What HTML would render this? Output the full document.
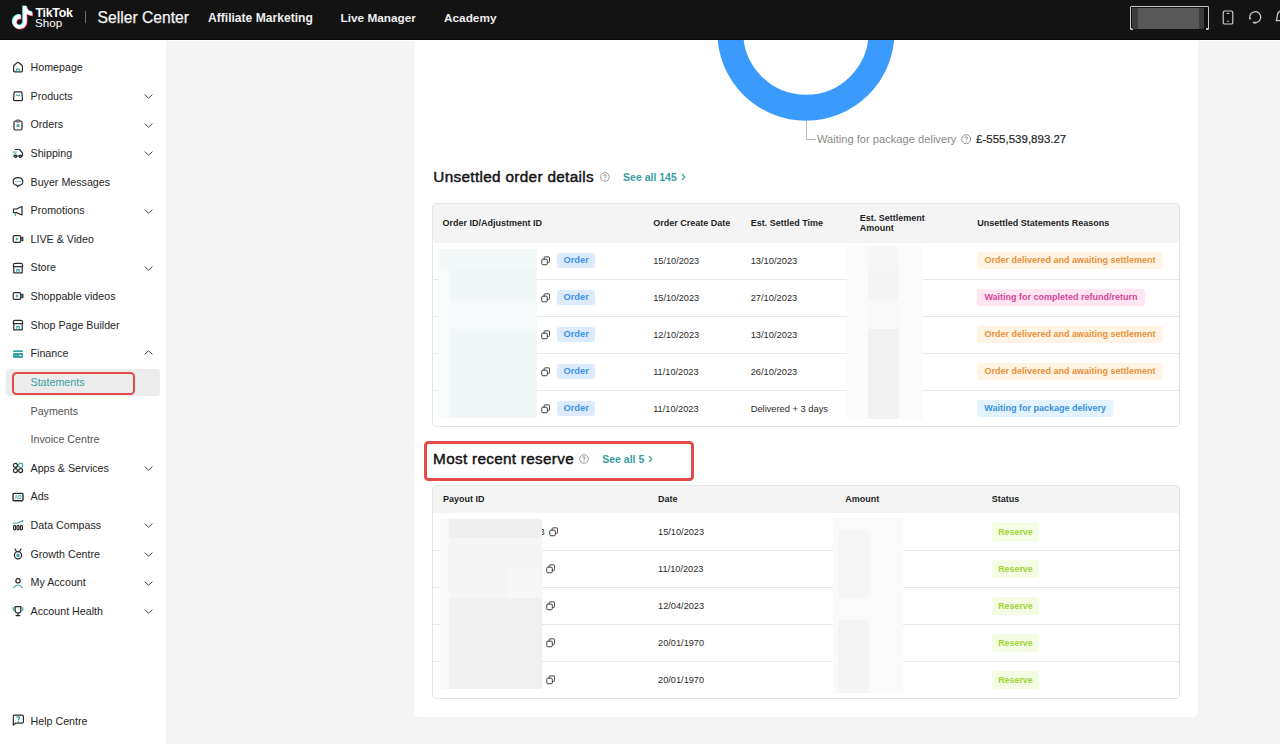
<!DOCTYPE html>
<html><head><meta charset="utf-8">
<style>
*{box-sizing:border-box;margin:0;padding:0}
html,body{width:1280px;height:744px;overflow:hidden;background:#f4f4f4;font-family:"Liberation Sans",sans-serif;color:#222}
.a{position:absolute;white-space:nowrap}
#hdr{position:absolute;left:0;top:0;width:1280px;height:40px;background:#131313;z-index:10;border-bottom:1px solid #0b0b0b}
#side{position:absolute;left:0;top:40px;width:166px;height:704px;background:#fff;z-index:5}
#gap{position:absolute;left:0;top:40px;width:1280px;height:1px;background:#fff;z-index:0}
.si{position:absolute;left:0;width:166px;height:28.63px;line-height:28.63px;font-size:10.7px;color:#262626}
.si .t{position:absolute;left:30.5px;top:0.4px}
.si svg.ic{position:absolute;left:12px;top:8.8px;width:12px;height:12px}
.si svg.ch{position:absolute;left:143.5px;top:12.8px;width:9px;height:5px}
#card{position:absolute;left:414px;top:-20px;width:784px;height:737px;background:#fff;border-radius:6px}
.tbl{position:absolute;border:1px solid #e5e5e5;border-radius:4px;overflow:hidden;background:#fff}
.th{position:absolute;left:0;top:0;width:100%;background:#f4f4f4}
.hd{position:absolute;font-size:9px;font-weight:bold;color:#1f1f1f;white-space:nowrap}
.rl{position:absolute;left:0;width:100%;height:1px;background:#ebebeb}
.cell{position:absolute;font-size:9.3px;color:#2a2a2a;white-space:nowrap;line-height:14px}
.tag{position:absolute;font-size:9px;font-weight:bold;white-space:nowrap;border-radius:3px;text-align:center}
.blur{position:absolute}
</style></head><body>

<!-- header -->
<div id="hdr">
  <svg class="a" style="left:10px;top:5px" width="25" height="26" viewBox="0 0 25 26">
    <g transform="translate(0.3,0.4) scale(0.95)">
      <path fill="#25f4ee" d="M12.525.02c1.31-.02 2.61-.01 3.91-.02.08 1.53.63 3.09 1.75 4.17 1.12 1.11 2.7 1.62 4.240 1.79v4.03c-1.44-.05-2.89-.35-4.2-.97-.57-.26-1.1-.59-1.62-.93-.01 2.92.01 5.84-.02 8.75-.08 1.4-.54 2.79-1.35 3.94-1.31 1.920-3.58 3.17-5.91 3.21-1.43.08-2.86-.31-4.080-1.03-2.02-1.19-3.44-3.37-3.65-5.71-.02-.5-.03-1-.01-1.49.18-1.9 1.12-3.72 2.58-4.96 1.66-1.44 3.98-2.13 6.15-1.72.02 1.48-.04 2.96-.04 4.44-.99-.32-2.15-.23-3.02.37-.63.41-1.110 1.04-1.36 1.75-.21.51-.15 1.07-.14 1.61.24 1.64 1.82 3.02 3.5 2.87 1.12-.01 2.19-.66 2.77-1.61.19-.33.4-.67.41-1.06.1-1.79.06-3.57.07-5.36.01-4.03-.01-8.05.02-12.07z"/>
    </g>
    <g transform="translate(1.7,1.8) scale(0.95)">
      <path fill="#fe2c55" d="M12.525.02c1.31-.02 2.61-.01 3.910-.02.08 1.53.63 3.09 1.75 4.17 1.12 1.11 2.7 1.62 4.24 1.79v4.03c-1.44-.05-2.89-.35-4.2-.97-.57-.26-1.1-.59-1.62-.93-.01 2.92.01 5.84-.02 8.75-.08 1.4-.54 2.79-1.35 3.94-1.31 1.92-3.58 3.17-5.91 3.21-1.43.08-2.86-.31-4.08-1.03-2.02-1.19-3.44-3.37-3.65-5.71-.02-.5-.03-1-.01-1.49.18-1.9 1.12-3.72 2.58-4.96 1.66-1.44 3.98-2.13 6.15-1.72.02 1.48-.04 2.96-.04 4.44-.99-.32-2.15-.23-3.02.37-.63.41-1.11 1.04-1.36 1.75-.21.51-.15 1.07-.14 1.61.24 1.64 1.82 3.02 3.5 2.87 1.12-.01 2.19-.66 2.77-1.61.19-.33.4-.67.41-1.06.1-1.79.06-3.57.07-5.36.01-4.03-.01-8.05.02-12.07z"/>
    </g>
    <g transform="translate(1.0,1.1) scale(0.95)">
      <path fill="#ffffff" d="M12.525.02c1.31-.02 2.61-.01 3.91-.02.08 1.53.63 3.09 1.75 4.17 1.12 1.11 2.7 1.62 4.24 1.79v4.03c-1.44-.05-2.89-.35-4.2-.97-.57-.26-1.1-.59-1.62-.93-.01 2.92.01 5.84-.02 8.75-.08 1.4-.54 2.79-1.35 3.94-1.31 1.92-3.58 3.17-5.91 3.21-1.43.08-2.86-.31-4.08-1.03-2.02-1.19-3.44-3.37-3.65-5.71-.02-.5-.03-1-.01-1.49.18-1.9 1.12-3.72 2.58-4.96 1.66-1.44 3.98-2.13 6.15-1.72.02 1.48-.04 2.96-.04 4.44-.99-.32-2.15-.23-3.02.37-.63.41-1.11 1.04-1.36 1.75-.21.51-.15 1.07-.14 1.61.24 1.64 1.82 3.02 3.5 2.87 1.12-.01 2.19-.66 2.77-1.61.19-.33.4-.67.41-1.060.1-1.79.06-3.57.07-5.36.01-4.03-.01-8.05.02-12.07z"/>
    </g>
  </svg>
  <div class="a" style="left:35.5px;top:4.6px;line-height:16px;font-size:12.4px;font-weight:bold;color:#fff;letter-spacing:-0.3px">TikTok</div>
  <div class="a" style="left:35px;top:14.5px;line-height:16px;font-size:11.6px;color:#fff">Shop</div>
  <div class="a" style="left:84.5px;top:11.3px;width:1px;height:11.7px;background:#6a6a6a"></div>
  <div class="a" style="left:97.5px;top:7.8px;line-height:20px;font-size:15.7px;color:#f4f4f4;-webkit-text-stroke:0.25px #f4f4f4">Seller Center</div>
  <div class="a" style="left:208px;top:9.9px;line-height:16px;font-size:12.1px;font-weight:bold;color:#eeeeee">Affiliate Marketing</div>
  <div class="a" style="left:340.5px;top:9.9px;line-height:16px;font-size:11.8px;font-weight:bold;color:#eeeeee">Live Manager</div>
  <div class="a" style="left:444px;top:9.9px;line-height:16px;font-size:11.8px;font-weight:bold;color:#eeeeee">Academy</div>
  <!-- right -->
  <div class="a" style="left:1129.5px;top:5.9px;width:79.3px;height:23.6px;border:1.5px solid #c9c9c9;border-bottom:none;border-radius:1.5px 1.5px 0 0"></div>
  <div class="a" style="left:1129.5px;top:28.2px;width:3px;height:1.4px;background:#c9c9c9;border-radius:0 0 0 1.5px"></div>
  <div class="a" style="left:1205.8px;top:28.2px;width:3px;height:1.4px;background:#c9c9c9;border-radius:0 0 1.5px 0"></div>
  <div class="a" style="left:1132px;top:8px;width:72px;height:21.1px;background:#3c3c3c"></div>
  <div class="a" style="left:1137.9px;top:8px;width:61px;height:21.1px;background:#575757"></div>
  <svg class="a" style="left:1222px;top:10px" width="12" height="15" viewBox="0 0 12 15"><rect x="1.2" y="1" width="9.6" height="13" rx="1.6" fill="none" stroke="#cfcfcf" stroke-width="1.2"/><line x1="4.6" y1="3.4" x2="7.4" y2="3.4" stroke="#cfcfcf" stroke-width="1"/><circle cx="6" cy="11.2" r="0.8" fill="#cfcfcf"/></svg>
  <svg class="a" style="left:1248px;top:10px" width="15" height="15" viewBox="0 0 15 15"><path d="M1.9 8.6 A5.5 5.5 0 1 1 7.2 12.7" fill="none" stroke="#c4c4c4" stroke-width="1.3"/><circle cx="1.95" cy="8.5" r="1.05" fill="#c4c4c4"/><path d="M5.6 12.6 H8" stroke="#c4c4c4" stroke-width="1.8" stroke-linecap="round"/></svg>
  <svg class="a" style="left:1274px;top:10px" width="8" height="15" viewBox="0 0 8 15"><path d="M2.6 10.2 L3.4 5 Q3.9 1.6 7 1" fill="none" stroke="#c4c4c4" stroke-width="1.3"/><path d="M1.6 10.6 H8" stroke="#c4c4c4" stroke-width="1.3"/></svg>
</div>
<div id="gap"></div>

<div id="side">
<div class="si" style="top:12.59px"><svg class="ic" viewBox="0 0 12 12" width="12" height="12"><path d="M1.6 5.2 Q1.6 4.6 2.1 4.2 L5.4 1.5 Q6 1 6.6 1.5 L9.9 4.2 Q10.4 4.6 10.4 5.2 V9.8 Q10.4 10.8 9.4 10.8 H2.6 Q1.6 10.8 1.6 9.8 Z" fill="none" stroke="#2b2b2b" stroke-width="1.2" stroke-linejoin="round" stroke-linecap="round"/><path d="M4.4 10.8 V9.2 Q4.4 7.8 6 7.8 Q7.6 7.8 7.6 9.2 V10.8" fill="none" stroke="#3aa6a6" stroke-width="1.2"/></svg><span class="t">Homepage</span></div>
<div class="si" style="top:41.22px"><svg class="ic" viewBox="0 0 12 12" width="12" height="12"><path d="M3 1.8 H9 Q9.8 1.8 9.9 2.6 L10.4 9.6 Q10.5 10.6 9.5 10.6 H2.5 Q1.5 10.6 1.6 9.6 L2.1 2.6 Q2.2 1.8 3 1.8 Z" fill="none" stroke="#2b2b2b" stroke-width="1.2" stroke-linejoin="round" stroke-linecap="round"/><path d="M4.3 4.9 Q6 6.5 7.7 4.9" fill="none" stroke="#3aa6a6" stroke-width="1.2" stroke-linecap="round"/></svg><span class="t">Products</span><svg class="ch" viewBox="0 0 9 5" width="9" height="5"><path d="M0.6 0.6 L4.5 4.2 L8.4 0.6" fill="none" stroke="#444" stroke-width="1"/></svg></div>
<div class="si" style="top:69.84px"><svg class="ic" viewBox="0 0 12 12" width="12" height="12"><rect x="2" y="2" width="8" height="9" rx="1.4" fill="none" stroke="#2b2b2b" stroke-width="1.2" stroke-linejoin="round" stroke-linecap="round"/><rect x="4.2" y="1.1" width="3.6" height="1.8" rx="0.5" fill="#fff" stroke="#2b2b2b" stroke-width="1"/><rect x="4.6" y="5.2" width="2.8" height="2.8" fill="#3aa6a6"/></svg><span class="t">Orders</span><svg class="ch" viewBox="0 0 9 5" width="9" height="5"><path d="M0.6 0.6 L4.5 4.2 L8.4 0.6" fill="none" stroke="#444" stroke-width="1"/></svg></div>
<div class="si" style="top:98.48px"><svg class="ic" viewBox="0 0 12 12" width="12" height="12"><path d="M3 2.5 H7.5 L10.5 5.8 V9 H1.8" fill="none" stroke="#2b2b2b" stroke-width="1.2" stroke-linejoin="round" stroke-linecap="round"/><circle cx="3.6" cy="9.3" r="1.2" fill="none" stroke="#2b2b2b" stroke-width="1.2" stroke-linejoin="round" stroke-linecap="round"/><circle cx="8.4" cy="9.3" r="1.2" fill="none" stroke="#2b2b2b" stroke-width="1.2" stroke-linejoin="round" stroke-linecap="round"/><path d="M1 5 H4.5 M1.8 7 H4" fill="none" stroke="#3aa6a6" stroke-width="1.2" stroke-linecap="round"/></svg><span class="t">Shipping</span><svg class="ch" viewBox="0 0 9 5" width="9" height="5"><path d="M0.6 0.6 L4.5 4.2 L8.4 0.6" fill="none" stroke="#444" stroke-width="1"/></svg></div>
<div class="si" style="top:127.11px"><svg class="ic" viewBox="0 0 12 12" width="12" height="12"><path d="M6 1.6 C9 1.6 10.8 3.4 10.8 5.6 C10.8 7.8 9 9.4 6.8 9.4 L5.6 10.8 L5 9.4 C2.8 9.2 1.2 7.6 1.2 5.6 C1.2 3.4 3 1.6 6 1.6 Z" fill="none" stroke="#2b2b2b" stroke-width="1.2" stroke-linejoin="round" stroke-linecap="round"/><path d="M3.4 5.6 H8.8" stroke="#3aa6a6" stroke-width="1" stroke-dasharray="1.2 0.8"/></svg><span class="t">Buyer Messages</span></div>
<div class="si" style="top:155.74px"><svg class="ic" viewBox="0 0 12 12" width="12" height="12"><path d="M1.5 4 H4.5 L10 1.5 V10 L4.5 7.6 H1.5 Z" fill="none" stroke="#2b2b2b" stroke-width="1.2" stroke-linejoin="round" stroke-linecap="round"/><path d="M3.4 7.8 V10.4" fill="none" stroke="#3aa6a6" stroke-width="1.2" stroke-linecap="round"/></svg><span class="t">Promotions</span><svg class="ch" viewBox="0 0 9 5" width="9" height="5"><path d="M0.6 0.6 L4.5 4.2 L8.4 0.6" fill="none" stroke="#444" stroke-width="1"/></svg></div>
<div class="si" style="top:184.37px"><svg class="ic" viewBox="0 0 12 12" width="12" height="12"><rect x="1.2" y="2.6" width="7.6" height="6.8" rx="1.4" fill="none" stroke="#2b2b2b" stroke-width="1.2" stroke-linejoin="round" stroke-linecap="round"/><path d="M8.8 5.2 L10.8 4.2 V7.8 L8.8 6.8" fill="none" stroke="#2b2b2b" stroke-width="1.2" stroke-linejoin="round" stroke-linecap="round"/><path d="M3.9 4.3 L6.6 6 L3.9 7.7 Z" fill="#3aa6a6"/></svg><span class="t">LIVE &amp; Video</span></div>
<div class="si" style="top:213.00px"><svg class="ic" viewBox="0 0 12 12" width="12" height="12"><path d="M1.8 4.4 V10.8 H10.2 V4.4" fill="none" stroke="#2b2b2b" stroke-width="1.2" stroke-linejoin="round" stroke-linecap="round"/><path d="M1.4 4.6 V3.2 Q1.4 1.4 3.2 1.4 H8.8 Q10.6 1.4 10.6 3.2 V4.6 Z" fill="none" stroke="#2b2b2b" stroke-width="1.2" stroke-linejoin="round" stroke-linecap="round"/><path d="M4.8 10.6 V7.6 H7.2 V10.6" fill="none" stroke="#3aa6a6" stroke-width="1.1"/></svg><span class="t">Store</span><svg class="ch" viewBox="0 0 9 5" width="9" height="5"><path d="M0.6 0.6 L4.5 4.2 L8.4 0.6" fill="none" stroke="#444" stroke-width="1"/></svg></div>
<div class="si" style="top:241.62px"><svg class="ic" viewBox="0 0 12 12" width="12" height="12"><rect x="1.2" y="2.6" width="7.6" height="6.8" rx="1.4" fill="none" stroke="#2b2b2b" stroke-width="1.2" stroke-linejoin="round" stroke-linecap="round"/><path d="M8.8 5.2 L10.8 4.2 V7.8 L8.8 6.8" fill="none" stroke="#2b2b2b" stroke-width="1.2" stroke-linejoin="round" stroke-linecap="round"/><path d="M3.9 4.3 L6.6 6 L3.9 7.7 Z" fill="#3aa6a6"/></svg><span class="t">Shoppable videos</span></div>
<div class="si" style="top:270.26px"><svg class="ic" viewBox="0 0 12 12" width="12" height="12"><path d="M1.8 4.4 V10.8 H10.2 V4.4" fill="none" stroke="#2b2b2b" stroke-width="1.2" stroke-linejoin="round" stroke-linecap="round"/><path d="M1.4 4.6 V3.2 Q1.4 1.4 3.2 1.4 H8.8 Q10.6 1.4 10.6 3.2 V4.6 Z" fill="none" stroke="#2b2b2b" stroke-width="1.2" stroke-linejoin="round" stroke-linecap="round"/><path d="M4.8 10.6 V7.6 H7.2 V10.6" fill="none" stroke="#3aa6a6" stroke-width="1.1"/></svg><span class="t">Shop Page Builder</span></div>
<div class="si" style="top:298.89px"><svg class="ic" viewBox="0 0 12 12" width="12" height="12"><rect x="1" y="2.2" width="10" height="7.8" rx="1.2" fill="#3aa6a6"/><rect x="1" y="4" width="10" height="1" fill="#fff"/><rect x="7" y="7" width="2.4" height="1" fill="#fff"/></svg><span class="t">Finance</span><svg class="ch" style="top:11.4px" viewBox="0 0 9 5" width="9" height="5"><path d="M0.6 4.4 L4.5 0.8 L8.4 4.4" fill="none" stroke="#444" stroke-width="1"/></svg></div>
<div class="si" style="top:327.52px"><div style="position:absolute;left:6px;top:1.4px;width:154px;height:27.2px;background:#ececec;border-radius:3px"></div><div style="position:absolute;left:12.2px;top:4.5px;width:122.6px;height:22.5px;border:2.8px solid #e34b49;border-radius:4.5px"></div><span class="t" style="color:#3a9f9f">Statements</span></div>
<div class="si" style="top:356.15px"><span class="t" style="color:#555">Payments</span></div>
<div class="si" style="top:384.78px"><span class="t" style="color:#555">Invoice Centre</span></div>
<div class="si" style="top:413.41px"><svg class="ic" viewBox="0 0 12 12" width="12" height="12"><circle cx="3.4" cy="3.4" r="2" fill="none" stroke="#2b2b2b" stroke-width="1.2" stroke-linejoin="round" stroke-linecap="round"/><rect x="6.6" y="1.4" width="4" height="4" rx="1.4" stroke="#3aa6a6" stroke-width="1.2" fill="none"/><circle cx="3.4" cy="8.6" r="2" fill="none" stroke="#2b2b2b" stroke-width="1.2" stroke-linejoin="round" stroke-linecap="round"/><circle cx="8.6" cy="8.6" r="2" fill="none" stroke="#2b2b2b" stroke-width="1.2" stroke-linejoin="round" stroke-linecap="round"/></svg><span class="t">Apps &amp; Services</span><svg class="ch" viewBox="0 0 9 5" width="9" height="5"><path d="M0.6 0.6 L4.5 4.2 L8.4 0.6" fill="none" stroke="#444" stroke-width="1"/></svg></div>
<div class="si" style="top:442.04px"><svg class="ic" viewBox="0 0 12 12" width="12" height="12"><rect x="1" y="2.4" width="10" height="7.4" rx="1.2" fill="none" stroke="#2b2b2b" stroke-width="1.4"/><text x="6" y="7.9" font-size="4.8" font-family="Liberation Sans" font-weight="bold" text-anchor="middle" fill="#3aa6a6">AD</text></svg><span class="t">Ads</span></div>
<div class="si" style="top:470.67px"><svg class="ic" viewBox="0 0 12 12" width="12" height="12"><rect x="1.6" y="6.4" width="2" height="4.4" rx="1" fill="none" stroke="#2b2b2b" stroke-width="1.2" stroke-linejoin="round" stroke-linecap="round"/><rect x="5" y="6.4" width="2" height="4.4" rx="1" fill="none" stroke="#2b2b2b" stroke-width="1.2" stroke-linejoin="round" stroke-linecap="round"/><rect x="8.4" y="6.4" width="2" height="4.4" rx="1" fill="none" stroke="#2b2b2b" stroke-width="1.2" stroke-linejoin="round" stroke-linecap="round"/><path d="M1.2 4 H5.4 L10.6 2" fill="none" stroke="#3aa6a6" stroke-width="1.2" stroke-linecap="round"/><circle cx="10.4" cy="2" r="0.9" fill="#3aa6a6"/></svg><span class="t">Data Compass</span><svg class="ch" viewBox="0 0 9 5" width="9" height="5"><path d="M0.6 0.6 L4.5 4.2 L8.4 0.6" fill="none" stroke="#444" stroke-width="1"/></svg></div>
<div class="si" style="top:499.30px"><svg class="ic" viewBox="0 0 12 12" width="12" height="12"><circle cx="6" cy="7.2" r="3.6" fill="none" stroke="#2b2b2b" stroke-width="1.2" stroke-linejoin="round" stroke-linecap="round"/><path d="M3 1 L4.4 3.4 M9 1 L7.6 3.4" fill="none" stroke="#2b2b2b" stroke-width="1.2" stroke-linejoin="round" stroke-linecap="round"/><path d="M6 5.3 L7.9 6.7 L7.2 8.9 H4.8 L4.1 6.7 Z" fill="#3aa6a6"/></svg><span class="t">Growth Centre</span><svg class="ch" viewBox="0 0 9 5" width="9" height="5"><path d="M0.6 0.6 L4.5 4.2 L8.4 0.6" fill="none" stroke="#444" stroke-width="1"/></svg></div>
<div class="si" style="top:527.92px"><svg class="ic" viewBox="0 0 12 12" width="12" height="12"><circle cx="6" cy="3.8" r="2.2" fill="none" stroke="#2b2b2b" stroke-width="1.2" stroke-linejoin="round" stroke-linecap="round"/><path d="M1.8 10.6 Q6 5.4 10.2 10.6" fill="none" stroke="#3aa6a6" stroke-width="1.2" stroke-linecap="round"/></svg><span class="t">My Account</span><svg class="ch" viewBox="0 0 9 5" width="9" height="5"><path d="M0.6 0.6 L4.5 4.2 L8.4 0.6" fill="none" stroke="#444" stroke-width="1"/></svg></div>
<div class="si" style="top:556.55px"><svg class="ic" viewBox="0 0 12 12" width="12" height="12"><path d="M3.2 1.6 H8.8 V5.4 Q8.8 8 6 8 Q3.2 8 3.2 5.4 Z" fill="none" stroke="#2b2b2b" stroke-width="1.2" stroke-linejoin="round" stroke-linecap="round"/><path d="M3 2.4 Q1 2.4 1.2 4.2 Q1.6 5.6 3.2 5.8 M9 2.4 Q11 2.4 10.8 4.2 Q10.4 5.6 8.8 5.8" fill="none" stroke="#3aa6a6" stroke-width="1.3"/><path d="M6 8 V10.4 M4 10.6 H8" fill="none" stroke="#2b2b2b" stroke-width="1.2" stroke-linejoin="round" stroke-linecap="round"/></svg><span class="t">Account Health</span><svg class="ch" viewBox="0 0 9 5" width="9" height="5"><path d="M0.6 0.6 L4.5 4.2 L8.4 0.6" fill="none" stroke="#444" stroke-width="1"/></svg></div>
<div class="si" style="top:666.18px"><svg class="ic" style="top:7.6px" viewBox="0 0 12 12" width="12" height="12"><path d="M2.4 1.2 H10 Q11.4 1.2 11.4 2.6 V7.8 Q11.4 9.2 10 9.2 H3.6 L1.3 11 V2.6 Q1.3 1.2 2.4 1.2 Z" fill="none" stroke="#2b2b2b" stroke-width="1.2" stroke-linejoin="round" stroke-linecap="round"/><path d="M4.7 3.9 Q4.8 2.6 6.2 2.6 Q7.6 2.6 7.6 3.8 Q7.6 4.7 6.4 5.3 V6.2" fill="none" stroke="#3aa6a6" stroke-width="1.3"/><rect x="5.7" y="6.9" width="1.3" height="1.3" fill="#3aa6a6"/></svg><span class="t">Help Centre</span></div>
</div>
<div id="card"></div>
<svg class="a" style="left:0;top:0;z-index:1" width="1280" height="130"><circle cx="805.9" cy="32.1" r="75.65" fill="none" stroke="#3b9bfd" stroke-width="25.89999999999999"/></svg>
<div class="a" style="left:805.6px;top:121px;width:1.1px;height:19.3px;background:#b9b9c1;z-index:2"></div>
<div class="a" style="left:805.6px;top:139.2px;width:10.4px;height:1.1px;background:#b9b9c1;z-index:2"></div>
<div class="a" style="left:816.9px;top:131px;line-height:16px;font-size:11.15px;color:#8a8a8a;z-index:2">Waiting for package delivery</div>
<svg class="a" style="left:960.60px;top:134.30px;z-index:2" width="10.4" height="10.4" viewBox="0 0 10 10"><circle cx="5" cy="5" r="4.3" fill="none" stroke="#8f8f8f" stroke-width="0.9"/><path d="M3.7 4 Q3.7 2.7 5 2.7 Q6.3 2.7 6.3 3.9 Q6.3 4.7 5 5.2 V5.9" fill="none" stroke="#8f8f8f" stroke-width="0.9"/><circle cx="5" cy="7.3" r="0.55" fill="#8f8f8f"/></svg>
<div class="a" style="left:976.1px;top:131px;line-height:16px;font-size:11.5px;color:#1f1f1f;-webkit-text-stroke:0.2px #1f1f1f;z-index:2">£-555,539,893.27</div>
<div class="a" style="left:433.3px;top:167.2px;line-height:20px;font-size:15.3px;letter-spacing:0.33px;color:#141414;-webkit-text-stroke:0.45px #141414;z-index:2">Unsettled order details</div>
<svg class="a" style="left:599.50px;top:172.00px;z-index:2" width="10.0" height="10.0" viewBox="0 0 10 10"><circle cx="5" cy="5" r="4.3" fill="none" stroke="#8f8f8f" stroke-width="0.9"/><path d="M3.7 4 Q3.7 2.7 5 2.7 Q6.3 2.7 6.3 3.9 Q6.3 4.7 5 5.2 V5.9" fill="none" stroke="#8f8f8f" stroke-width="0.9"/><circle cx="5" cy="7.3" r="0.55" fill="#8f8f8f"/></svg>
<div class="a" style="left:623.1px;top:169px;line-height:16px;font-size:10.5px;font-weight:bold;color:#3a9ea1;z-index:3">See all 145<svg style="display:inline-block;margin-left:4px;vertical-align:0px" width="5" height="8" viewBox="0 0 5 8"><path d="M1 1 L3.8 4 L1 7" fill="none" stroke="#3a9ea1" stroke-width="1.1"/></svg></div>
<div class="a" style="left:432.3px;top:203.3px;width:748.0px;height:223.7px;border:1px solid #e4e4e4;border-radius:4px;background:#fff;overflow:hidden;z-index:2"><div style="position:absolute;left:0;top:0;width:100%;height:38.5px;background:#f4f4f4"></div></div>
<div class="a" style="left:442.5px;top:215.60px;line-height:14px;font-size:9px;font-weight:bold;color:#1f1f1f;z-index:3">Order ID/Adjustment ID</div>
<div class="a" style="left:653.2px;top:215.60px;line-height:14px;font-size:9px;font-weight:bold;color:#1f1f1f;z-index:3">Order Create Date</div>
<div class="a" style="left:750.7px;top:215.60px;line-height:14px;font-size:9px;font-weight:bold;color:#1f1f1f;z-index:3">Est. Settled Time</div>
<div class="a" style="left:859.8px;top:212.5px;line-height:10.4px;font-size:9px;font-weight:bold;color:#1f1f1f;z-index:3">Est. Settlement<br>Amount</div>
<div class="a" style="left:977.2px;top:215.60px;line-height:14px;font-size:9px;font-weight:bold;color:#1f1f1f;z-index:3">Unsettled Statements Reasons</div>
<div class="a" style="left:433.3px;top:279.3px;width:746.0px;height:1px;background:#e8e8e8;z-index:2"></div>
<svg class="a" style="left:540.80px;top:256.00px;z-index:3" width="9.4" height="9.6" viewBox="0 0 10 10"><rect x="3.3" y="0.8" width="5.9" height="5.9" rx="1" fill="none" stroke="#333" stroke-width="1"/><rect x="0.8" y="3.3" width="5.9" height="5.9" rx="1" fill="#fff" stroke="#333" stroke-width="1"/></svg>
<div class="a" style="left:557.00px;top:252.85px;width:38.30px;height:14.70px;line-height:14.70px;padding-top:0.5px;background:#dcebfc;color:#3d93ea;font-size:9.3px;font-weight:bold;border-radius:3px;text-align:center;z-index:3">Order</div>
<div class="a" style="left:653.2px;top:253.80px;line-height:14px;font-size:9.2px;color:#2b2b2b;z-index:3">15/10/2023</div>
<div class="a" style="left:750.7px;top:253.80px;line-height:14px;font-size:9.3px;color:#2b2b2b;z-index:3">13/10/2023</div>
<div class="a" style="left:977.20px;top:251.60px;width:185.60px;height:17.20px;line-height:17.20px;padding-top:0.5px;background:#fff4e4;color:#e8903a;font-size:9.0px;font-weight:bold;border-radius:3px;text-align:center;z-index:3">Order delivered and awaiting settlement</div>
<div class="a" style="left:433.3px;top:316.3px;width:746.0px;height:1px;background:#e8e8e8;z-index:2"></div>
<svg class="a" style="left:540.80px;top:293.00px;z-index:3" width="9.4" height="9.6" viewBox="0 0 10 10"><rect x="3.3" y="0.8" width="5.9" height="5.9" rx="1" fill="none" stroke="#333" stroke-width="1"/><rect x="0.8" y="3.3" width="5.9" height="5.9" rx="1" fill="#fff" stroke="#333" stroke-width="1"/></svg>
<div class="a" style="left:557.00px;top:289.85px;width:38.30px;height:14.70px;line-height:14.70px;padding-top:0.5px;background:#dcebfc;color:#3d93ea;font-size:9.3px;font-weight:bold;border-radius:3px;text-align:center;z-index:3">Order</div>
<div class="a" style="left:653.2px;top:290.80px;line-height:14px;font-size:9.2px;color:#2b2b2b;z-index:3">15/10/2023</div>
<div class="a" style="left:750.7px;top:290.80px;line-height:14px;font-size:9.3px;color:#2b2b2b;z-index:3">27/10/2023</div>
<div class="a" style="left:977.20px;top:288.60px;width:167.60px;height:17.20px;line-height:17.20px;padding-top:0.5px;background:#fde5f1;color:#d9449e;font-size:9.0px;font-weight:bold;border-radius:3px;text-align:center;z-index:3">Waiting for completed refund/return</div>
<div class="a" style="left:433.3px;top:353.3px;width:746.0px;height:1px;background:#e8e8e8;z-index:2"></div>
<svg class="a" style="left:540.80px;top:330.00px;z-index:3" width="9.4" height="9.6" viewBox="0 0 10 10"><rect x="3.3" y="0.8" width="5.9" height="5.9" rx="1" fill="none" stroke="#333" stroke-width="1"/><rect x="0.8" y="3.3" width="5.9" height="5.9" rx="1" fill="#fff" stroke="#333" stroke-width="1"/></svg>
<div class="a" style="left:557.00px;top:326.85px;width:38.30px;height:14.70px;line-height:14.70px;padding-top:0.5px;background:#dcebfc;color:#3d93ea;font-size:9.3px;font-weight:bold;border-radius:3px;text-align:center;z-index:3">Order</div>
<div class="a" style="left:653.2px;top:327.80px;line-height:14px;font-size:9.2px;color:#2b2b2b;z-index:3">12/10/2023</div>
<div class="a" style="left:750.7px;top:327.80px;line-height:14px;font-size:9.3px;color:#2b2b2b;z-index:3">13/10/2023</div>
<div class="a" style="left:977.20px;top:325.60px;width:185.60px;height:17.20px;line-height:17.20px;padding-top:0.5px;background:#fff4e4;color:#e8903a;font-size:9.0px;font-weight:bold;border-radius:3px;text-align:center;z-index:3">Order delivered and awaiting settlement</div>
<div class="a" style="left:433.3px;top:390.3px;width:746.0px;height:1px;background:#e8e8e8;z-index:2"></div>
<svg class="a" style="left:540.80px;top:367.00px;z-index:3" width="9.4" height="9.6" viewBox="0 0 10 10"><rect x="3.3" y="0.8" width="5.9" height="5.9" rx="1" fill="none" stroke="#333" stroke-width="1"/><rect x="0.8" y="3.3" width="5.9" height="5.9" rx="1" fill="#fff" stroke="#333" stroke-width="1"/></svg>
<div class="a" style="left:557.00px;top:363.85px;width:38.30px;height:14.70px;line-height:14.70px;padding-top:0.5px;background:#dcebfc;color:#3d93ea;font-size:9.3px;font-weight:bold;border-radius:3px;text-align:center;z-index:3">Order</div>
<div class="a" style="left:653.2px;top:364.80px;line-height:14px;font-size:9.2px;color:#2b2b2b;z-index:3">11/10/2023</div>
<div class="a" style="left:750.7px;top:364.80px;line-height:14px;font-size:9.3px;color:#2b2b2b;z-index:3">26/10/2023</div>
<div class="a" style="left:977.20px;top:362.60px;width:185.60px;height:17.20px;line-height:17.20px;padding-top:0.5px;background:#fff4e4;color:#e8903a;font-size:9.0px;font-weight:bold;border-radius:3px;text-align:center;z-index:3">Order delivered and awaiting settlement</div>
<svg class="a" style="left:540.80px;top:404.00px;z-index:3" width="9.4" height="9.6" viewBox="0 0 10 10"><rect x="3.3" y="0.8" width="5.9" height="5.9" rx="1" fill="none" stroke="#333" stroke-width="1"/><rect x="0.8" y="3.3" width="5.9" height="5.9" rx="1" fill="#fff" stroke="#333" stroke-width="1"/></svg>
<div class="a" style="left:557.00px;top:400.85px;width:38.30px;height:14.70px;line-height:14.70px;padding-top:0.5px;background:#dcebfc;color:#3d93ea;font-size:9.3px;font-weight:bold;border-radius:3px;text-align:center;z-index:3">Order</div>
<div class="a" style="left:653.2px;top:401.80px;line-height:14px;font-size:9.2px;color:#2b2b2b;z-index:3">11/10/2023</div>
<div class="a" style="left:750.7px;top:401.80px;line-height:14px;font-size:9.3px;color:#2b2b2b;z-index:3">Delivered + 3 days</div>
<div class="a" style="left:977.20px;top:399.60px;width:135.80px;height:17.20px;line-height:17.20px;padding-top:0.5px;background:#e3f3fd;color:#3a8fe0;font-size:9.0px;font-weight:bold;border-radius:3px;text-align:center;z-index:3">Waiting for package delivery</div>
<div class="a" style="left:437.5px;top:249.4px;width:99.90px;height:168.30px;background:#f8fbfb;z-index:3"></div>
<div class="a" style="left:449.5px;top:249.4px;width:87.90px;height:19.90px;background:#f3f8f8;z-index:3"></div>
<div class="a" style="left:449.5px;top:269.3px;width:87.90px;height:30.00px;background:#f1f7f7;z-index:3"></div>
<div class="a" style="left:449.5px;top:299.3px;width:87.90px;height:30.00px;background:#f6fafa;z-index:3"></div>
<div class="a" style="left:449.5px;top:329.3px;width:87.90px;height:88.40px;background:#f1f6f6;z-index:3"></div>
<div class="a" style="left:437.5px;top:249.4px;width:12.00px;height:19.90px;background:#f4f8f8;z-index:3"></div>
<div class="a" style="left:847.4px;top:245.6px;width:75.80px;height:173.70px;background:#fbfbfb;z-index:3"></div>
<div class="a" style="left:867.9px;top:245.6px;width:31.00px;height:24.40px;background:#f7f7f7;z-index:3"></div>
<div class="a" style="left:867.9px;top:270px;width:31.00px;height:29.30px;background:#f5f5f5;z-index:3"></div>
<div class="a" style="left:867.9px;top:299.3px;width:31.00px;height:30.00px;background:#f9f9f9;z-index:3"></div>
<div class="a" style="left:867.9px;top:329.3px;width:31.00px;height:90.00px;background:#f1f1f1;z-index:3"></div>
<div class="a" style="left:424.1px;top:441px;width:269.5px;height:40.3px;border:3px solid #e34b49;border-radius:4.5px;z-index:3"></div>
<div class="a" style="left:433.1px;top:448.6px;line-height:20px;font-size:15.3px;letter-spacing:0.3px;color:#141414;-webkit-text-stroke:0.45px #141414;z-index:3">Most recent reserve</div>
<svg class="a" style="left:578.80px;top:453.90px;z-index:2" width="10.0" height="10.0" viewBox="0 0 10 10"><circle cx="5" cy="5" r="4.3" fill="none" stroke="#8f8f8f" stroke-width="0.9"/><path d="M3.7 4 Q3.7 2.7 5 2.7 Q6.3 2.7 6.3 3.9 Q6.3 4.7 5 5.2 V5.9" fill="none" stroke="#8f8f8f" stroke-width="0.9"/><circle cx="5" cy="7.3" r="0.55" fill="#8f8f8f"/></svg>
<div class="a" style="left:602.2px;top:450.9px;line-height:16px;font-size:10.5px;font-weight:bold;color:#3a9ea1;z-index:3">See all 5<svg style="display:inline-block;margin-left:4px;vertical-align:0px" width="5" height="8" viewBox="0 0 5 8"><path d="M1 1 L3.8 4 L1 7" fill="none" stroke="#3a9ea1" stroke-width="1.1"/></svg></div>
<div class="a" style="left:432.3px;top:485px;width:748.0px;height:213.5px;border:1px solid #e4e4e4;border-radius:4px;background:#fff;overflow:hidden;z-index:2"><div style="position:absolute;left:0;top:0;width:100%;height:27.4px;background:#f4f4f4"></div></div>
<div class="a" style="left:442.9px;top:492.20px;line-height:14px;font-size:9px;font-weight:bold;color:#1f1f1f;z-index:3">Payout ID</div>
<div class="a" style="left:658.1px;top:492.20px;line-height:14px;font-size:9px;font-weight:bold;color:#1f1f1f;z-index:3">Date</div>
<div class="a" style="left:845.3px;top:492.20px;line-height:14px;font-size:9px;font-weight:bold;color:#1f1f1f;z-index:3">Amount</div>
<div class="a" style="left:991.7px;top:492.20px;line-height:14px;font-size:9px;font-weight:bold;color:#1f1f1f;z-index:3">Status</div>
<div class="a" style="left:433.3px;top:549.9px;width:746.0px;height:1px;background:#e8e8e8;z-index:2"></div>
<svg class="a" style="left:548.60px;top:527.40px;z-index:3" width="9.4" height="9.6" viewBox="0 0 10 10"><rect x="3.3" y="0.8" width="5.9" height="5.9" rx="1" fill="none" stroke="#333" stroke-width="1"/><rect x="0.8" y="3.3" width="5.9" height="5.9" rx="1" fill="#fff" stroke="#333" stroke-width="1"/></svg>
<div class="a" style="left:658.1px;top:524.70px;line-height:14px;font-size:9.2px;color:#2b2b2b;z-index:3">15/10/2023</div>
<div class="a" style="left:991.70px;top:523.20px;width:47.60px;height:17.60px;line-height:17.60px;padding-top:1.0px;background:#f5fce4;color:#9fd33a;font-size:8.9px;font-weight:bold;border-radius:3px;text-align:center;z-index:3">Reserve</div>
<div class="a" style="left:433.3px;top:586.9px;width:746.0px;height:1px;background:#e8e8e8;z-index:2"></div>
<svg class="a" style="left:545.90px;top:564.40px;z-index:3" width="9.4" height="9.6" viewBox="0 0 10 10"><rect x="3.3" y="0.8" width="5.9" height="5.9" rx="1" fill="none" stroke="#333" stroke-width="1"/><rect x="0.8" y="3.3" width="5.9" height="5.9" rx="1" fill="#fff" stroke="#333" stroke-width="1"/></svg>
<div class="a" style="left:658.1px;top:561.70px;line-height:14px;font-size:9.2px;color:#2b2b2b;z-index:3">11/10/2023</div>
<div class="a" style="left:991.70px;top:560.20px;width:47.60px;height:17.60px;line-height:17.60px;padding-top:1.0px;background:#f5fce4;color:#9fd33a;font-size:8.9px;font-weight:bold;border-radius:3px;text-align:center;z-index:3">Reserve</div>
<div class="a" style="left:433.3px;top:623.9px;width:746.0px;height:1px;background:#e8e8e8;z-index:2"></div>
<svg class="a" style="left:545.90px;top:601.40px;z-index:3" width="9.4" height="9.6" viewBox="0 0 10 10"><rect x="3.3" y="0.8" width="5.9" height="5.9" rx="1" fill="none" stroke="#333" stroke-width="1"/><rect x="0.8" y="3.3" width="5.9" height="5.9" rx="1" fill="#fff" stroke="#333" stroke-width="1"/></svg>
<div class="a" style="left:658.1px;top:598.70px;line-height:14px;font-size:9.2px;color:#2b2b2b;z-index:3">12/04/2023</div>
<div class="a" style="left:991.70px;top:597.20px;width:47.60px;height:17.60px;line-height:17.60px;padding-top:1.0px;background:#f5fce4;color:#9fd33a;font-size:8.9px;font-weight:bold;border-radius:3px;text-align:center;z-index:3">Reserve</div>
<div class="a" style="left:433.3px;top:660.9px;width:746.0px;height:1px;background:#e8e8e8;z-index:2"></div>
<svg class="a" style="left:545.90px;top:638.40px;z-index:3" width="9.4" height="9.6" viewBox="0 0 10 10"><rect x="3.3" y="0.8" width="5.9" height="5.9" rx="1" fill="none" stroke="#333" stroke-width="1"/><rect x="0.8" y="3.3" width="5.9" height="5.9" rx="1" fill="#fff" stroke="#333" stroke-width="1"/></svg>
<div class="a" style="left:658.1px;top:635.70px;line-height:14px;font-size:9.2px;color:#2b2b2b;z-index:3">20/01/1970</div>
<div class="a" style="left:991.70px;top:634.20px;width:47.60px;height:17.60px;line-height:17.60px;padding-top:1.0px;background:#f5fce4;color:#9fd33a;font-size:8.9px;font-weight:bold;border-radius:3px;text-align:center;z-index:3">Reserve</div>
<svg class="a" style="left:545.90px;top:675.40px;z-index:3" width="9.4" height="9.6" viewBox="0 0 10 10"><rect x="3.3" y="0.8" width="5.9" height="5.9" rx="1" fill="none" stroke="#333" stroke-width="1"/><rect x="0.8" y="3.3" width="5.9" height="5.9" rx="1" fill="#fff" stroke="#333" stroke-width="1"/></svg>
<div class="a" style="left:658.1px;top:672.70px;line-height:14px;font-size:9.2px;color:#2b2b2b;z-index:3">20/01/1970</div>
<div class="a" style="left:991.70px;top:671.20px;width:47.60px;height:17.60px;line-height:17.60px;padding-top:1.0px;background:#f5fce4;color:#9fd33a;font-size:8.9px;font-weight:bold;border-radius:3px;text-align:center;z-index:3">Reserve</div>
<div class="a" style="left:539.6px;top:525px;line-height:14px;font-size:9.3px;color:#333;z-index:2">3</div>
<div class="a" style="left:440.2px;top:518.9px;width:101.40px;height:169.90px;background:#f8f8f8;z-index:3"></div>
<div class="a" style="left:449.2px;top:518.9px;width:92.40px;height:19.10px;background:#eeeeee;z-index:3"></div>
<div class="a" style="left:449.2px;top:538px;width:92.40px;height:60.00px;background:#f5f5f5;z-index:3"></div>
<div class="a" style="left:508px;top:568px;width:33.60px;height:30.00px;background:#f7f7f7;z-index:3"></div>
<div class="a" style="left:449.2px;top:598px;width:92.40px;height:90.80px;background:#f0f0f0;z-index:3"></div>
<div class="a" style="left:833px;top:518px;width:70.00px;height:175.00px;background:#fafafa;z-index:3"></div>
<div class="a" style="left:837.5px;top:530px;width:31.90px;height:68.00px;background:#f6f6f6;z-index:3"></div>
<div class="a" style="left:837.5px;top:620px;width:31.90px;height:73.00px;background:#f5f5f5;z-index:3"></div>
</body></html>
